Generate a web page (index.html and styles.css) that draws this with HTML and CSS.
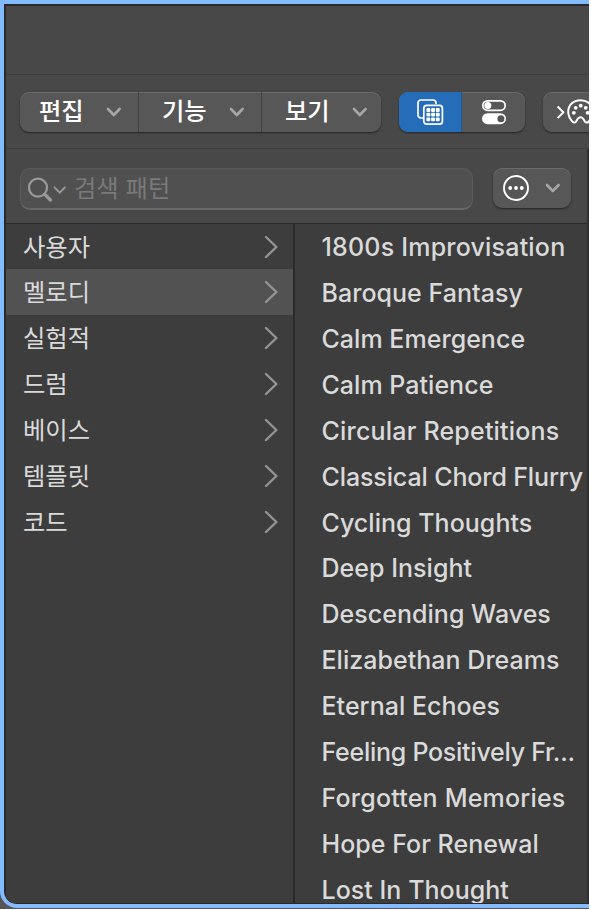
FILE: index.html
```html
<!DOCTYPE html>
<html lang="ko">
  <head>
    <meta charset="UTF-8" />
    <meta name="viewport" content="width=device-width, initial-scale=1.0" />
    <title>패턴 브라우저</title>
    <link rel="stylesheet" href="styles.css" />
  </head>
  <body>
    <div class="stage">
      <div class="window">
        <div class="titlebar"></div>

        <div class="toolbar">
          <div class="group menus">
            <button class="menu">
              <span>편집</span>
              <svg class="down" viewBox="0 0 16 10"><path d="M2 2l5.8 6L13.6 2" /></svg>
            </button>
            <button class="menu">
              <span>기능</span>
              <svg class="down" viewBox="0 0 16 10"><path d="M2 2l5.8 6L13.6 2" /></svg>
            </button>
            <button class="menu">
              <span>보기</span>
              <svg class="down" viewBox="0 0 16 10"><path d="M2 2l5.8 6L13.6 2" /></svg>
            </button>
          </div>

          <div class="group views">
            <button class="view active">
              <svg width="28" height="28" viewBox="0 0 28 28" fill="none" stroke="#fff" stroke-width="1.7">
                <path d="M7 20H5a3 3 0 0 1-3-3V5a3 3 0 0 1 3-3h12a3 3 0 0 1 3 3v1" />
                <rect x="7.8" y="7.4" width="18.6" height="18.8" rx="3" />
                <g fill="#fff" stroke="none">
                  <rect x="10.4" y="10" width="3.9" height="3.9" rx="1" />
                  <rect x="15.1" y="10" width="3.9" height="3.9" rx="1" />
                  <rect x="19.8" y="10" width="3.9" height="3.9" rx="1" />
                  <rect x="10.4" y="14.7" width="3.9" height="3.9" rx="1" />
                  <rect x="15.1" y="14.7" width="3.9" height="3.9" rx="1" />
                  <rect x="19.8" y="14.7" width="3.9" height="3.9" rx="1" />
                  <rect x="10.4" y="19.4" width="3.9" height="3.9" rx="1" />
                  <rect x="15.1" y="19.4" width="3.9" height="3.9" rx="1" />
                  <rect x="19.8" y="19.4" width="3.9" height="3.9" rx="1" />
                </g>
              </svg>
            </button>
            <button class="view">
              <svg width="26" height="26" viewBox="0 0 26 26">
                <rect x="1.8" y="1.8" width="22.4" height="9.6" rx="4.8" fill="none" stroke="#fff" stroke-width="1.7" />
                <circle cx="6.8" cy="6.6" r="3.5" fill="#fff" />
                <rect x="1" y="14.2" width="24" height="11" rx="5.5" fill="#fff" />
                <circle cx="19.9" cy="19.7" r="3.5" fill="#555" />
              </svg>
            </button>
          </div>

          <div class="group palette">
            <svg width="40" height="28" viewBox="0 0 40 28" fill="none" stroke="#fff" stroke-width="2">
              <path d="M2.6 8.5l5.8 5.8-5.8 5.8" />
              <path d="M25.5 2.2c-7.3 0-12.3 5-12.3 11.6 0 3.4 1.3 6.5 3.8 9.4 1.4 1.7 3 1.8 4.1.4 1.1-1.6 1.6-4.3 4.4-4.3s3.3 2.7 4.4 4.3c1.1 1.4 2.7 1.3 4.1-.4 2.5-2.9 3.8-6 3.8-9.4 0-6.6-5-11.6-12.3-11.6z" />
              <g fill="#fff" stroke="none">
                <circle cx="18.8" cy="14.8" r="1.9" />
                <circle cx="20.7" cy="9.8" r="1.9" />
                <circle cx="25.7" cy="7.7" r="1.9" />
                <circle cx="30.7" cy="9.8" r="1.9" />
                <circle cx="32.6" cy="14.8" r="1.9" />
              </g>
            </svg>
          </div>
        </div>

        <div class="browser">
          <div class="searchbar">
            <div class="search">
              <svg class="glass" width="40" height="28" viewBox="0 0 40 28" fill="none">
                <circle cx="10" cy="12.6" r="9" stroke="#999" stroke-width="2.3" />
                <path d="M16.8 19.4l5.6 5.6" stroke="#999" stroke-width="3.4" stroke-linecap="round" />
                <path d="M26.5 12.4l5.2 5.2 5.2-5.2" stroke="#999" stroke-width="2" stroke-linecap="round" />
              </svg>
              <span>검색 패턴</span>
            </div>
            <div class="group more">
              <svg width="26" height="26" viewBox="0 0 26 26" fill="none" stroke="#fff" stroke-width="1.9">
                <circle cx="13" cy="13" r="12" />
                <g fill="#fff" stroke="none">
                  <circle cx="7.2" cy="13" r="1.9" />
                  <circle cx="13" cy="13" r="1.9" />
                  <circle cx="18.8" cy="13" r="1.9" />
                </g>
              </svg>
              <svg class="down" viewBox="0 0 16 10"><path d="M2 2l5.8 6L13.6 2" /></svg>
            </div>
          </div>

          <div class="columns">
            <ul class="categories">
              <li>사용자<svg class="right" viewBox="0 0 14 24"><path d="M2 2l10.400 10L2 22" /></svg></li>
              <li class="selected">멜로디<svg class="right" viewBox="0 0 14 24"><path d="M2 2l10.400 10L2 22" /></svg></li>
              <li>실험적<svg class="right" viewBox="0 0 14 24"><path d="M2 2l10.400 10L2 22" /></svg></li>
              <li>드럼<svg class="right" viewBox="0 0 14 24"><path d="M2 2l10.400 10L2 22" /></svg></li>
              <li>베이스<svg class="right" viewBox="0 0 14 24"><path d="M2 2l10.400 10L2 22" /></svg></li>
              <li>템플릿<svg class="right" viewBox="0 0 14 24"><path d="M2 2l10.400 10L2 22" /></svg></li>
              <li>코드<svg class="right" viewBox="0 0 14 24"><path d="M2 2l10.400 10L2 22" /></svg></li>
            </ul>
            <ul class="patterns">
              <li class="loose">1800s Improvisation</li>
              <li>Baroque Fantasy</li>
              <li>Calm Emergence</li>
              <li>Calm Patience</li>
              <li class="loose">Circular Repetitions</li>
              <li class="tight">Classical Chord Flurry</li>
              <li>Cycling Thoughts</li>
              <li>Deep Insight</li>
              <li>Descending Waves</li>
              <li>Elizabethan Dreams</li>
              <li>Eternal Echoes</li>
              <li class="tight">Feeling Positively Fr...</li>
              <li class="loose">Forgotten Memories</li>
              <li>Hope For Renewal</li>
              <li>Lost In Thought</li>
            </ul>
          </div>
        </div>
      </div>
    </div>
  </body>
</html>
```

FILE: styles.css
```css
* {
  box-sizing: border-box;
}

body,
ul {
  margin: 0;
  padding: 0;
}

body {
  background-color: #fff;
  font-family: Inter, "Noto Sans CJK KR", sans-serif;
  color: #dadada;
  overflow: hidden;
}

ul {
  list-style: none;
}

svg {
  display: block;
  flex: none;
}

button {
  margin: 0;
  padding: 0;
  border: 0;
  background: none;
  color: inherit;
  font: inherit;
}

.stage {
  width: 589px;
  height: 909px;
  padding-bottom: 1px;
  background-color: #555;
  overflow: hidden;
}

.window {
  display: flex;
  flex-direction: column;
  height: 908px;
  border: 4px solid #82bcff;
  border-right: 0;
  border-radius: 0 0 0 17px;
  box-shadow: inset 2px 2px 0 #292929, inset 0 -1px 0 #292929;
  background-color: #484848;
  padding: 2px 0 1px 2px;
  overflow: hidden;
}

.titlebar {
  height: 69px;
  border-bottom: 1px solid #3e3e3e;
}

.toolbar {
  display: flex;
  height: 74px;
  padding: 17px 0 0 14px;
  border-bottom: 1px solid #3f3f3f;
}

.group {
  display: flex;
  flex: none;
  height: 40px;
  border-radius: 9px;
  background-color: #575757;
  box-shadow: inset 0 1px 0 #6b6b6b, 0 1px 2px rgba(0, 0, 0, 0.5);
}

.menus {
  width: 361px;
  margin-right: 18px;
}

.menu {
  display: flex;
  align-items: center;
  justify-content: space-between;
  width: 123px;
  padding: 0 16px 0 23px;
  border-right: 1px solid #424242;
  color: #fff;
  font-size: 24.3px;
  font-weight: 500;
  line-height: 38px;
}

.menu span {
  height: 40px;
}

.menu:first-child {
  width: 119px;
  padding-left: 19px;
}

.menu:last-child {
  width: 119px;
  padding-right: 13px;
  border-right: 0;
}

.down {
  width: 16px;
  height: 10px;
  fill: none;
  stroke: #a6a6a6;
  stroke-width: 2.6;
  stroke-linecap: round;
  stroke-linejoin: round;
}

.views {
  width: 126px;
  margin-right: 18px;
  overflow: hidden;
}

.view {
  display: flex;
  align-items: center;
  justify-content: center;
  width: 63px;
}

.active {
  background-color: #256db9;
  border-right: 1px solid #205790;
}

.palette {
  width: 80px;
  align-items: center;
  padding-left: 12px;
}

.browser {
  display: flex;
  flex-direction: column;
  flex: 1;
  min-height: 0;
  border-right: 2px solid #303030;
}

.searchbar {
  display: flex;
  flex: none;
  justify-content: space-between;
  height: 75px;
  padding: 19px 16px 0 14px;
  border-bottom: 1px solid #292929;
}

.search {
  display: flex;
  align-items: center;
  width: 453px;
  height: 42px;
  padding-left: 7px;
  border: 1px solid #5b5b5b;
  border-bottom: 2px solid #686868;
  border-radius: 10px;
  background-color: #505050;
  color: #797979;
  font-size: 24.3px;
  line-height: 39px;
}

.search span {
  margin-left: 6px;
}

.more {
  width: 78px;
  padding: 0 10px;
  align-items: center;
  justify-content: space-between;
}

.columns {
  display: flex;
  flex: 1;
  min-height: 0;
  overflow: hidden;
  background-color: #3d3d3d;
}

.categories {
  width: 289px;
  border-right: 2px solid #2a2a2a;
}

.categories li {
  display: flex;
  justify-content: space-between;
  align-items: center;
  height: 45.93px;
  padding: 0 15px 0 17px;
  font-size: 24.3px;
  line-height: 42px;
}

/* first row sits right under the search bar, slightly shorter */
.categories li:first-child {
  height: 45.3px;
}

.categories .selected {
  background-color: #525252;
}

.right {
  width: 14px;
  height: 24px;
  fill: none;
  stroke: #949494;
  stroke-width: 2.4;
  stroke-linecap: round;
  stroke-linejoin: round;
}

.patterns {
  padding-left: 26.5px;
}

.patterns li {
  height: 45.93px;
  font-size: 25px;
  font-weight: 500;
  line-height: 46.5px;
  letter-spacing: 0.03px;
  white-space: nowrap;
}

.patterns .loose {
  letter-spacing: 0.2px;
}

.patterns .tight {
  letter-spacing: -0.12px;
}

.patterns li:nth-child(12) {
  letter-spacing: -0.26px;
}
```
